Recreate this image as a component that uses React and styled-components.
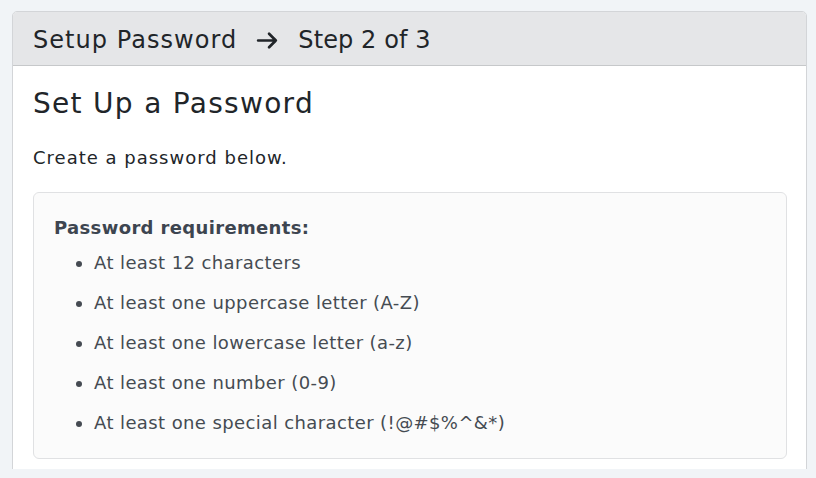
import styled, { createGlobalStyle } from "styled-components";

const Global = createGlobalStyle`
  * { box-sizing: border-box; }
  html, body { margin: 0; padding: 0; background: #f1f4f7; }
  body {
    font-family: "DejaVu Sans", "Noto Sans", sans-serif;
    color: #212529;
  }
`

const Page = styled.div`
  padding: 11px 9px 0 12px;
  height: 469px;
  overflow: hidden;
`

const Card = styled.div`
  background: #fff;
  border: 1px solid #d3d5d8;
  border-radius: 5px;
  overflow: hidden;
`

const Header = styled.div`
  background: #e5e6e8;
  border-bottom: 1px solid #c6c8ca;
  padding: 14px 20px 11px;
  font-size: 24px;
  line-height: 28px;
  display: flex;
  align-items: center;
  gap: 18px;
`

const Crumb = styled.span`
  letter-spacing: ${(p) => p.$spacing || "0.6px"};
`

const Arrow = styled.svg`
  width: 25px;
  height: 25px;
  flex: none;
`

const Body = styled.div`
  padding: 21px 19px 40px 20px;
`

const Title = styled.h3`
  margin: 0 0 24px;
  font-size: 28px;
  font-weight: 400;
  line-height: 34px;
  letter-spacing: 1.3px;
`

const Lead = styled.p`
  margin: 0 0 21px;
  font-size: 18px;
  line-height: 26px;
  letter-spacing: 1px;
`

const Requirements = styled.div`
  background: #fbfbfb;
  border: 1px solid #e0e1e3;
  border-radius: 6px;
  padding: 22px 20px 22px;
  color: #454b52;
`

const ReqTitle = styled.div`
  font-weight: 700;
  font-size: 18px;
  line-height: 26px;
  letter-spacing: 0.35px;
  color: #3d4550;
`

const List = styled.ul`
  margin: 0;
  padding-left: 40px;
`

const Item = styled.li`
  font-size: 18px;
  line-height: 26px;
  letter-spacing: 0.4px;
  margin-top: 14px;
  &:first-child { margin-top: 9px; }
`

const rules = [
  "At least 12 characters",
  "At least one uppercase letter (A-Z)",
  "At least one lowercase letter (a-z)",
  "At least one number (0-9)",
  "At least one special character (!@#$%^&*)",
]

export default function App() {
  return (
    <>
      <Global />
      <Page>
        <Card>
          <Header>
            <Crumb $spacing="1.05px">Setup Password</Crumb>
            <Arrow viewBox="0 0 24 24" fill="none" stroke="#212529" strokeWidth="2.6" strokeLinecap="round" strokeLinejoin="round">
              <path d="M3 12h17M13.5 5.5 20 12l-6.5 6.5" />
            </Arrow>
            <Crumb $spacing="0.1px">Step 2 of 3</Crumb>
          </Header>
          <Body>
            <Title>Set Up a Password</Title>
            <Lead>Create a password below.</Lead>
            <Requirements>
              <ReqTitle>Password requirements:</ReqTitle>
              <List>
                {rules.map((r) => (
                  <Item key={r}>{r}</Item>
                ))}
              </List>
            </Requirements>
          </Body>
        </Card>
      </Page>
    </>
  );
}
